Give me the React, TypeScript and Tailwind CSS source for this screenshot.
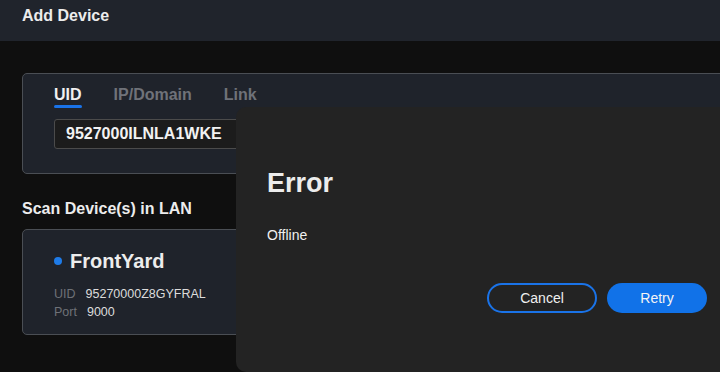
const font = { fontFamily: '"Liberation Sans", Arial, sans-serif' };

const InfoRow = ({ label, value }: { label: string; value: string }) => (
  <div className="flex gap-[10px] text-[12.5px] leading-[18px]">
    <span className="text-[#6e7177]">{label}</span>
    <span className="text-[#dcdcdc]">{value}</span>
  </div>
);

const App = () => {
  return (
    <div
      className="relative h-[372px] w-[720px] overflow-hidden bg-[#0f0f0f] text-[#ececec]"
      style={font}
    >
      {/* header */}
      <div className="h-[41px] bg-[#20242c] px-[22px] pt-[6px] text-[16px] font-bold leading-[20px]">
        Add Device
      </div>

      <main className="w-[820px] px-[22px]">
        {/* connect by */}
        <div className="mt-[32px] h-[101px] rounded-[5px] border border-[#4a4e54] bg-[#1f232b] pl-[31px] pt-[11px]">
          <div className="flex gap-8 text-[16px] font-bold leading-[20px]">
            <div className="flex flex-col">
              <span className="text-[#f0f0f0]">UID</span>
              <span className="h-[3px] rounded-full bg-[#1a73e8]" />
            </div>
            <span className="text-[#6f7279]">IP/Domain</span>
            <span className="text-[#6f7279]">Link</span>
          </div>
          <div className="mt-[11px] flex h-[30px] w-[360px] items-center rounded-[3px] border border-[#4b4b4b] bg-[#1c1c1c] pl-[11px] text-[16px] font-bold text-[#f2f2f2]">
            9527000ILNLA1WKE
          </div>
        </div>

        <div className="mt-[25px] text-[16px] font-bold leading-[20px] text-[#ececec]">
          Scan Device(s) in LAN
        </div>

        {/* device found */}
        <div className="mt-[10px] h-[106px] w-[420px] rounded-[5px] border border-[#4a4e54] bg-[#1f232b] pl-[31px] pt-[19px]">
          <div className="flex items-center gap-[8px] text-[20px] font-bold leading-[24px] text-[#ededed]">
            <span className="h-[8px] w-[8px] rounded-full bg-[#1e7be8]" />
            FrontYard
          </div>
          <div className="mt-[12px]">
            <InfoRow label="UID" value="95270000Z8GYFRAL" />
            <InfoRow label="Port" value="9000" />
          </div>
        </div>
      </main>

      {/* error dialog */}
      <div className="absolute left-[236px] top-[107px] flex h-[265px] w-[500px] flex-col rounded-[10px] bg-[#232323] pl-[31px] pr-[29px] pt-[60px]">
        <div className="text-[27px] font-bold leading-[32px] text-[#ececec]">Error</div>
        <div className="mt-[28px] text-[14px] leading-[16px] text-[#f0f0f0]">Offline</div>
        <div className="mt-[40px] flex justify-end gap-[10px] text-[14px]">
          <button className="h-[30px] w-[110px] rounded-full border-2 border-[#1a73e8] text-[#f0f0f0]">
            Cancel
          </button>
          <button className="h-[30px] w-[100px] rounded-full bg-[#1172e8] text-[#f4f4f4]">
            Retry
          </button>
        </div>
      </div>
    </div>
  );
};

export default App;
